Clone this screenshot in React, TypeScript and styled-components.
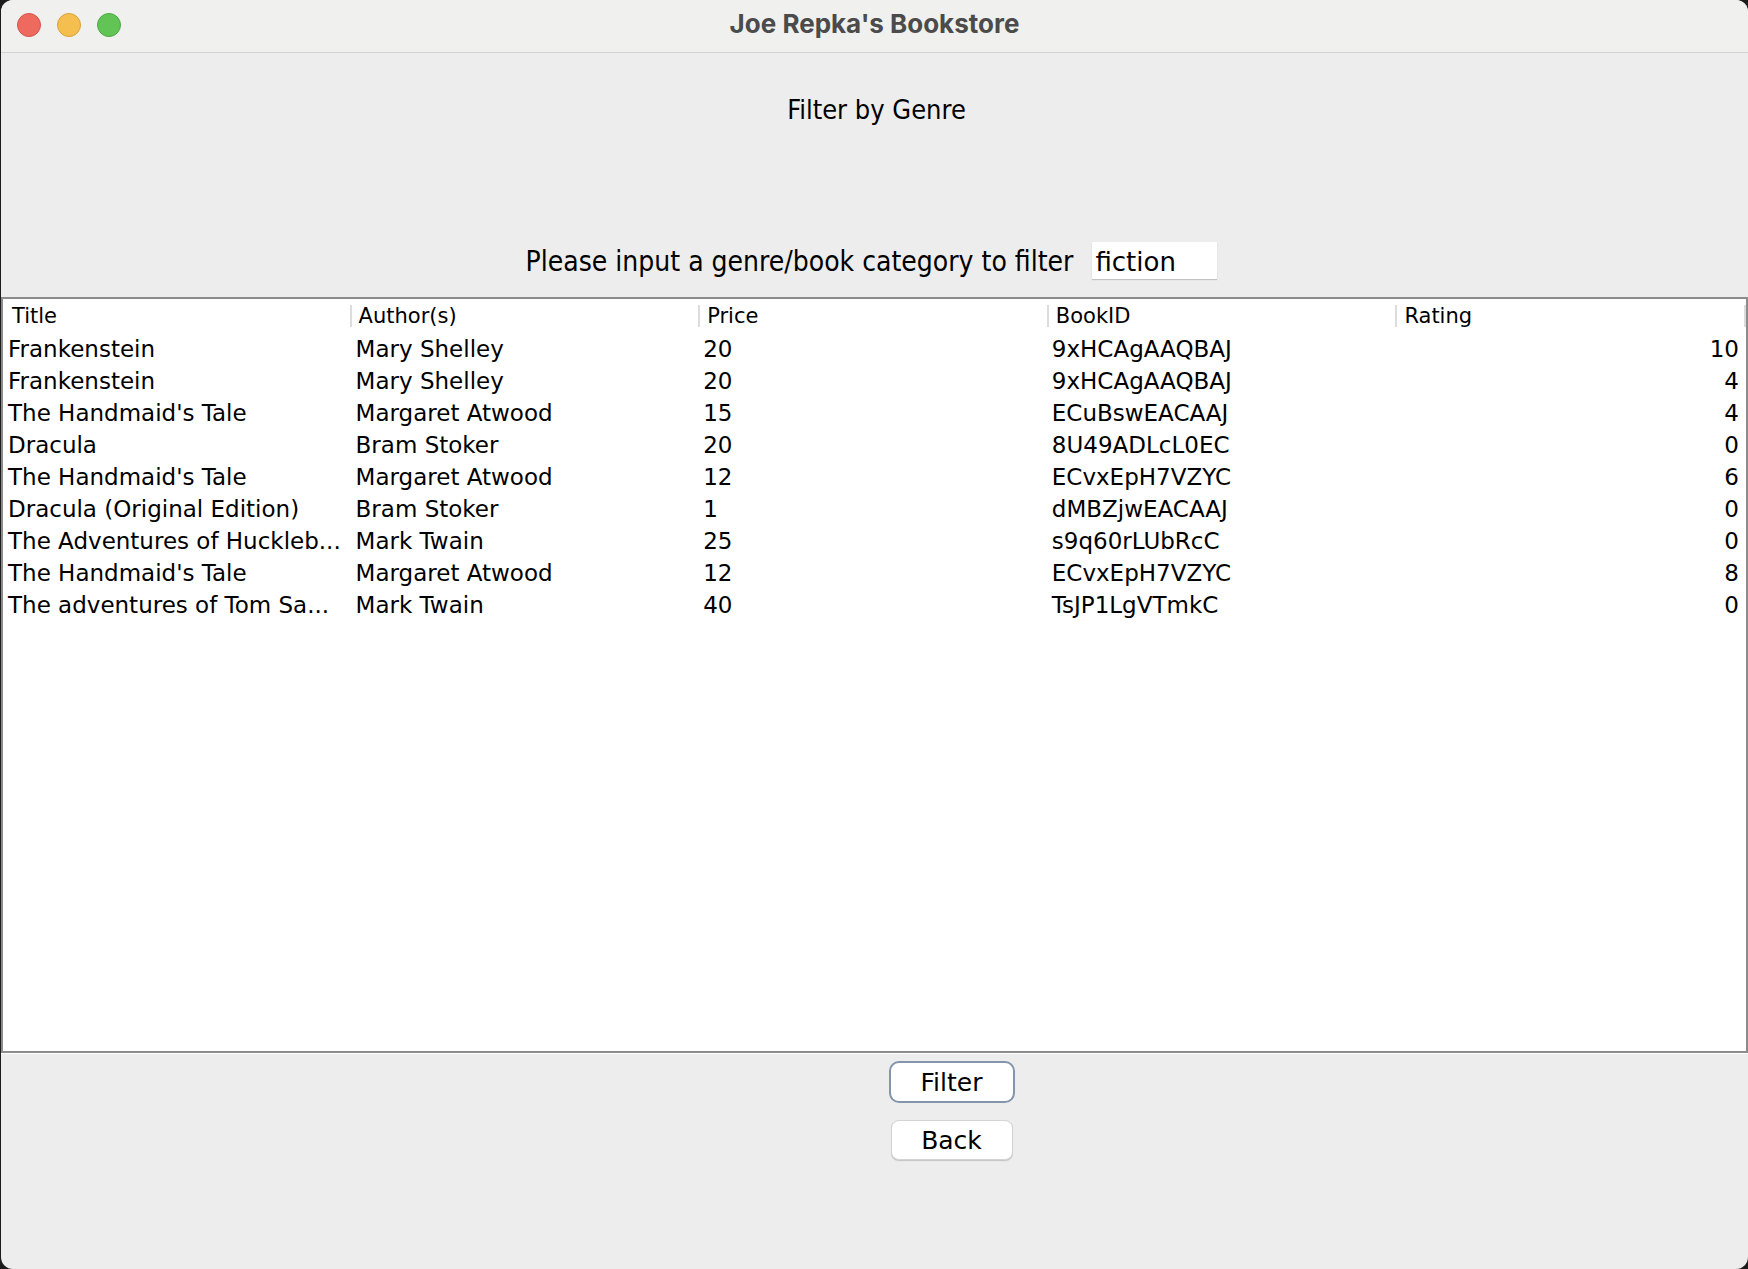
import React from "react";
import styled, { createGlobalStyle } from "styled-components";

const GlobalStyle = createGlobalStyle`
  html, body { margin: 0; padding: 0; background: #1c1c1c; }
  body { width: 1748px; height: 1269px; overflow: hidden; }
  * { box-sizing: border-box; }
`;

const Window = styled.div`
  width: 1747px;
  height: 1269px;
  margin-left: 1px;
  border-radius: 12px;
  overflow: hidden;
  background: #ededed;
  display: flex;
  flex-direction: column;
  font-family: "DejaVu Sans", "Noto Sans", sans-serif;
  color: #000;
`;

const TitleBar = styled.div`
  height: 53px;
  flex: none;
  background: #f0f0ef;
  border-bottom: 1px solid #d2d2d2;
  display: grid;
  grid-template-columns: 1fr auto 1fr;
  align-items: center;
`;

const Lights = styled.div`
  display: flex;
  gap: 16px;
  padding-left: 16px;
  padding-bottom: 3px;
`;

const Light = styled.span<{ $fill: string; $edge: string }>`
  width: 24px;
  height: 24px;
  border-radius: 50%;
  background: ${(p) => p.$fill};
  border: 1px solid ${(p) => p.$edge};
`;

const WindowTitle = styled.div`
  font-family: Inter, "Liberation Sans", sans-serif;
  font-weight: 700;
  font-size: 26px;
  line-height: 48px;
  height: 52px;
  color: #4b4b4b;
  white-space: nowrap;
`;

const Content = styled.div`
  flex: 1;
  display: flex;
  flex-direction: column;
`;

const Heading = styled.div`
  margin-top: 41px;
  height: 32px;
  line-height: 32px;
  font-family: "DejaVu Sans Condensed", "DejaVu Sans", sans-serif;
  font-stretch: condensed;
  font-size: 27px;
  text-align: center;
  padding-left: 4px;
`;

const FilterRow = styled.div`
  margin-top: 116px;
  display: flex;
  justify-content: center;
  align-items: baseline;
  gap: 19px;
  padding-right: 6px;
`;

const Label = styled.span`
  font-family: "DejaVu Sans Condensed", "DejaVu Sans", sans-serif;
  font-stretch: condensed;
  font-size: 28px;
  white-space: nowrap;
`;

const GenreInput = styled.input`
  width: 125px;
  height: 37px;
  padding: 3px 0 0 3px;
  line-height: 34px;
  border: none;
  outline: none;
  background: #fff;
  box-shadow: 0 1px 1px rgba(0, 0, 0, 0.18);
  font-family: "DejaVu Sans", sans-serif;
  font-size: 26px;
  color: #000;
`;

const Table = styled.div`
  margin-top: 18px;
  height: 756px;
  flex: none;
  border: 2px solid #8c8c8c;
  background: #fff;
  box-shadow: 0 1px 0 #ffffff;
  display: flex;
  flex-direction: column;
`;

const HeaderRow = styled.div`
  height: 34px;
  display: grid;
  grid-template-columns: repeat(5, 1fr);
`;

const HeaderCell = styled.div<{ $first?: boolean }>`
  padding-left: ${(p) => (p.$first ? "9px" : "7px")};
  line-height: 34px;
  font-family: "DejaVu Sans", sans-serif;
  font-size: 21px;
  white-space: nowrap;
  background: linear-gradient(#dcdcdc, #dcdcdc) right center / 2px 22px no-repeat;
`;

const Row = styled.div`
  height: 32px;
  display: grid;
  grid-template-columns: repeat(5, 1fr);
`;

const Cell = styled.div<{ $tight?: boolean; $right?: boolean; $first?: boolean }>`
  padding-left: ${(p) => (p.$first ? "5px" : p.$tight ? "3px" : "4px")};
  padding-right: ${(p) => (p.$right ? "7px" : "0")};
  text-align: ${(p) => (p.$right ? "right" : "left")};
  line-height: 32px;
  font-family: "DejaVu Sans", sans-serif;
  font-size: 23px;
  white-space: nowrap;
  overflow: hidden;
`;

const Buttons = styled.div`
  margin-top: 8px;
  display: flex;
  flex-direction: column;
  align-items: center;
  gap: 17px;
  padding-left: 154px;
`;

const PushButton = styled.button<{ $focused?: boolean }>`
  width: ${(p) => (p.$focused ? "126px" : "122px")};
  height: ${(p) => (p.$focused ? "42px" : "40px")};
  border-radius: ${(p) => (p.$focused ? "10px" : "8px")};
  border: ${(p) => (p.$focused ? "2px solid #8494ab" : "1px solid #d4d4d4")};
  box-shadow: ${(p) => (p.$focused ? "none" : "0 1px 1px rgba(0,0,0,0.18)")};
  background: #fff;
  font-family: "DejaVu Sans", sans-serif;
  font-size: 25px;
  color: #000;
  padding: 0;
  line-height: 1;
`;

const columns = ["Title", "Author(s)", "Price", "BookID", "Rating"];

const books: [string, string, string, string, string][] = [
  ["Frankenstein", "Mary Shelley", "20", "9xHCAgAAQBAJ", "10"],
  ["Frankenstein", "Mary Shelley", "20", "9xHCAgAAQBAJ", "4"],
  ["The Handmaid's Tale", "Margaret Atwood", "15", "ECuBswEACAAJ", "4"],
  ["Dracula", "Bram Stoker", "20", "8U49ADLcL0EC", "0"],
  ["The Handmaid's Tale", "Margaret Atwood", "12", "ECvxEpH7VZYC", "6"],
  ["Dracula (Original Edition)", "Bram Stoker", "1", "dMBZjwEACAAJ", "0"],
  ["The Adventures of Huckleb...", "Mark Twain", "25", "s9q60rLUbRcC", "0"],
  ["The Handmaid's Tale", "Margaret Atwood", "12", "ECvxEpH7VZYC", "8"],
  ["The adventures of Tom Sa...", "Mark Twain", "40", "TsJP1LgVTmkC", "0"],
];

export default function App() {
  return (
    <>
      <GlobalStyle />
      <Window>
        <TitleBar>
          <Lights>
            <Light $fill="#ee6a5e" $edge="#d5554b" />
            <Light $fill="#f5bf4f" $edge="#d9a23a" />
            <Light $fill="#61c454" $edge="#4ea843" />
          </Lights>
          <WindowTitle>Joe Repka's Bookstore</WindowTitle>
          <div />
        </TitleBar>
        <Content>
          <Heading>Filter by Genre</Heading>
          <FilterRow>
            <Label>Please input a genre/book category to filter</Label>
            <GenreInput defaultValue="fiction" />
          </FilterRow>
          <Table>
            <HeaderRow>
              {columns.map((c, i) => (
                <HeaderCell key={c} $first={i === 0}>
                  {c}
                </HeaderCell>
              ))}
            </HeaderRow>
            {books.map((b, r) => (
              <Row key={r}>
                <Cell $first>{b[0]}</Cell>
                <Cell>{b[1]}</Cell>
                <Cell $tight>{b[2]}</Cell>
                <Cell $tight>{b[3]}</Cell>
                <Cell $right>{b[4]}</Cell>
              </Row>
            ))}
          </Table>
          <Buttons>
            <PushButton $focused>Filter</PushButton>
            <PushButton>Back</PushButton>
          </Buttons>
        </Content>
      </Window>
    </>
  );
}
